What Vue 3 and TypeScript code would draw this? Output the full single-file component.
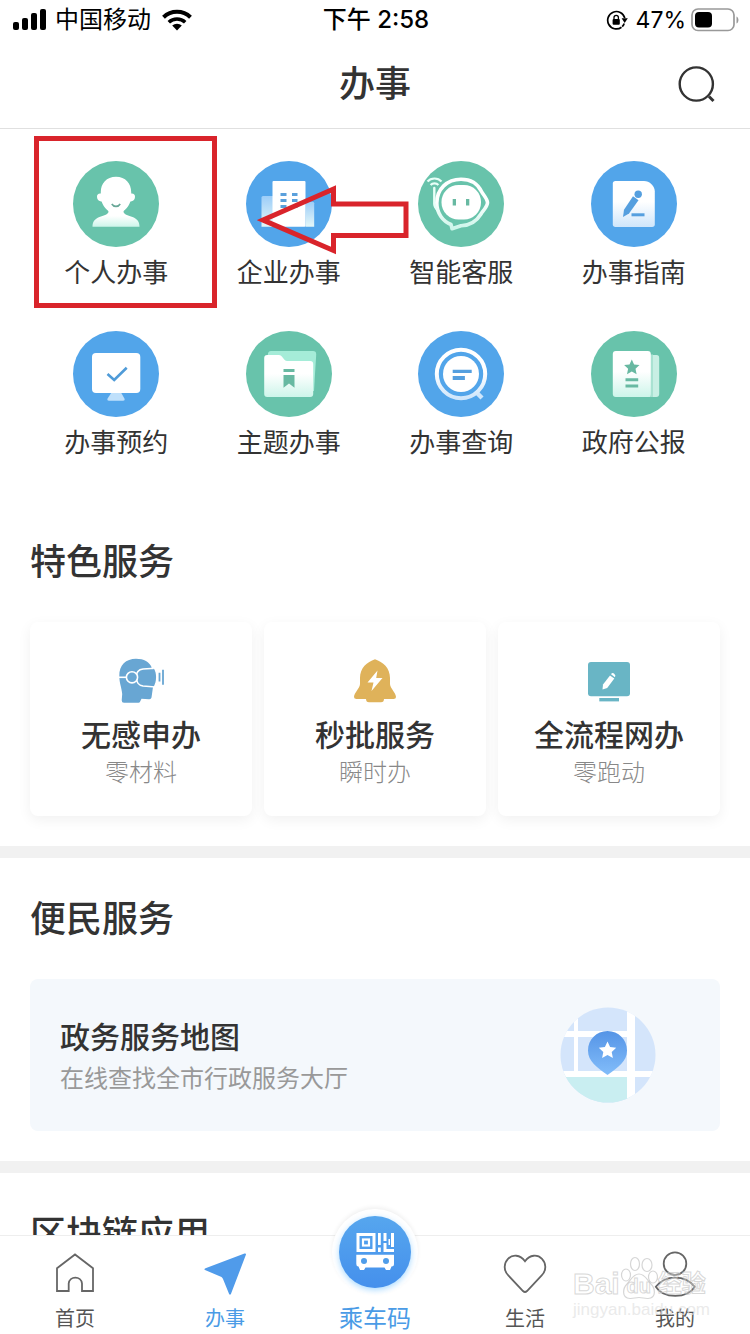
<script setup lang="ts">
interface Service {
  id: string
  label: string
  tone: 'green' | 'blue'
}

interface Feature {
  id: string
  title: string
  note: string
}

const services: Service[] = [
  { id: 'personal', label: '个人办事', tone: 'green' },
  { id: 'business', label: '企业办事', tone: 'blue' },
  { id: 'assistant', label: '智能客服', tone: 'green' },
  { id: 'guide', label: '办事指南', tone: 'blue' },
  { id: 'booking', label: '办事预约', tone: 'blue' },
  { id: 'topic', label: '主题办事', tone: 'green' },
  { id: 'query', label: '办事查询', tone: 'blue' },
  { id: 'gazette', label: '政府公报', tone: 'green' },
]

const features: Feature[] = [
  { id: 'vr', title: '无感申办', note: '零材料' },
  { id: 'bell', title: '秒批服务', note: '瞬时办' },
  { id: 'online', title: '全流程网办', note: '零跑动' },
]
</script>

<template>
  <div class="page">
    <div class="status">
      <div class="status-side">
        <svg class="signal" width="34" height="22" viewBox="0 0 34 22" aria-hidden="true">
          <rect x="0" y="13" width="6" height="8" rx="2" />
          <rect x="9" y="9" width="6" height="12" rx="2" />
          <rect x="18" y="4" width="6" height="17" rx="2" />
          <rect x="27" y="0" width="6" height="21" rx="2" />
        </svg>
        <span class="carrier">中国移动</span>
        <svg width="30" height="22" viewBox="0 0 30 22" aria-hidden="true">
          <path d="M1.500 8.200a19.500 19.500 0 0 1 27 0" fill="none" stroke="#000" stroke-width="4" />
          <path d="M6.800 13.200a12 12 0 0 1 16.400 0" fill="none" stroke="#000" stroke-width="3.600" />
          <path d="M15 21.500l-4.800-4.900a7 7 0 0 1 9.600 0z" />
        </svg>
      </div>
      <div class="clock">下午 2:58</div>
      <div class="status-side status-right">
        <svg width="22" height="22" viewBox="0 0 22 22" aria-hidden="true">
          <path d="M15.500 18.300A8.700 8.700 0 1 1 18.800 9" fill="none" stroke="#000" stroke-width="1.700" />
          <path d="M18.200 14.500a8.600 8.600 0 0 1-2 3.200" fill="none" stroke="#000" stroke-width="1.700" />
          <path d="M15.600 9.300h6.200l-3.100 4.600z" />
          <rect x="6.600" y="10" width="7.200" height="5.800" rx="1" />
          <path d="M8 10.500V8.600a2.200 2.200 0 0 1 4.400 0v1.900" fill="none" stroke="#000" stroke-width="1.300" />
        </svg>
        <span class="percent">47%</span>
        <svg width="48" height="24" viewBox="0 0 48 24" aria-hidden="true">
          <rect x="1" y="1" width="42" height="21.500" rx="6" fill="none" stroke="#999" stroke-width="1.700" />
          <rect x="4" y="4" width="17" height="15.500" rx="4" />
          <path d="M45.500 8.500c2.600 1 2.600 6 0 7z" fill="#999" />
        </svg>
      </div>
    </div>

    <header class="header">
      <h1>办事</h1>
      <button class="search" type="button" aria-label="搜索">
        <svg width="40" height="40" viewBox="0 0 40 40" fill="none" stroke="#333" stroke-width="2.400">
          <circle cx="18.300" cy="20" r="16.600" />
          <path d="M31 32.500l4.500 4.500" stroke-width="3" />
        </svg>
      </button>
    </header>

    <main class="content">
      <nav class="services" aria-label="服务">
        <a v-for="s in services" :key="s.id" class="service" href="#">
          <svg width="86" height="86" viewBox="0 0 86 86" aria-hidden="true">
            <defs>
              <linearGradient :id="'fade-' + s.id" x1="0" y1="0" x2="0" y2="1">
                <stop offset="0.45" stop-color="#fff" />
                <stop offset="1" :stop-color="s.tone === 'green' ? '#cdf5ea' : '#cfe6fb'" />
              </linearGradient>
              <linearGradient :id="'wing-' + s.id" x1="0" y1="0" x2="0" y2="1">
                <stop offset="0" :stop-color="s.tone === 'green' ? '#9be3cf' : '#9ccdf8'" />
                <stop offset="1" stop-color="#e4f7f8" />
              </linearGradient>
            </defs>
            <circle cx="43" cy="43" r="43" :fill="s.tone === 'green' ? '#68c3ab' : '#52a5ea'" />

            <g v-if="s.id === 'personal'">
              <path d="M35.500 46h15v5c1 3 5 3.500 9 5 5 2 7 5 7 9.800h-47c0-4.800 2-7.800 7-9.800 4-1.500 8-2 9-5z" :fill="`url(#fade-${s.id})`" />
              <path d="M43 15.700c9.500 0 15.200 6.600 15.200 15.300v1.500c2.500-.3 4 1.200 3.800 3.500-.2 3-2.200 4.600-4.600 4.400C55.300 46.500 50 52.500 43 52.500S30.700 46.500 28.600 40.400c-2.400.2-4.400-1.400-4.600-4.400-.2-2.300 1.300-3.800 3.800-3.500V31c0-8.700 5.700-15.300 15.200-15.300z" fill="#fff" />
              <path d="M38.800 43c2 3.200 6.400 3.200 8.400 0" fill="none" stroke="#68a797" stroke-width="1.600" />
            </g>

            <g v-else-if="s.id === 'business'">
              <path d="M17 35h10v30.700H15.500V36.500q0-1.500 1.500-1.500z" :fill="`url(#wing-${s.id})`" />
              <path d="M59.500 40.700h7.200q1.500 0 1.500 1.500v23.500h-8.700z" :fill="`url(#wing-${s.id})`" />
              <rect x="26.500" y="20" width="33" height="45.700" rx="1" fill="#fff" />
              <path d="M34.500 32h6v3h-6zM46 32h5.500v3H46zM34.500 38h6v3h-6zM46 38h5.500v3H46zM34.500 44h6v3h-6zM46 44h5.500v3H46z" fill="#5aa0dc" />
            </g>

            <g v-else-if="s.id === 'assistant'">
              <path d="M18.800 42C18.800 28 29 18.200 43 18.200c10 0 17 5 20.500 12.300 1.200 2.500 6 7.500 6 11.200s-4.800 8.500-6.500 11.300C58.500 60.500 51 64.500 43 64.700l-9 3-1-4.200C24.500 60 18.800 52 18.800 42z" :stroke="`url(#fade-${s.id})`" stroke-width="3.600" fill="none" stroke-linejoin="round" />
              <path d="M16.300 27v16c0 3 2 5 4 7" fill="none" stroke="#e8fff8" stroke-width="2.400" stroke-linecap="round" />
              <rect x="23.500" y="24" width="39.500" height="34.500" rx="17" fill="#fff" />
              <path d="M34.700 38H38v6.500h-3.300zM48 38h3.300v6.500H48z" fill="#68b9a2" />
              <path d="M9.500 20.500c3.500-4 10.500-4 14 0M12.600 24c2-2.300 5.800-2.300 7.800 0" fill="none" stroke="#e8fff8" stroke-width="2.200" />
            </g>

            <g v-else-if="s.id === 'guide'">
              <path d="M24.500 20H53c5.500 0 10.800 5 10.800 10.500v32.800q0 2.700-2.700 2.700H24.500q-2.700 0-2.700-2.700V22.700q0-2.700 2.700-2.700z" :fill="`url(#fade-${s.id})`" />
              <path d="M42 35.300l5.500 3.900-9.500 13.300-6 3.500 1-7.200z" fill="#559fdf" />
              <circle cx="47.200" cy="33.300" r="3.700" fill="#559fdf" />
              <path d="M40.500 52.300h13v3h-13z" fill="#559fdf" />
            </g>

            <g v-else-if="s.id === 'booking'">
              <path d="M38.500 61.500h9.500l3.700 6.500q.3 1.700-1.500 1.700H35.800q-1.800 0-1.500-1.700z" fill="#bfe0fb" />
              <rect x="19" y="22" width="48.300" height="40" rx="4" fill="#fff" />
              <path d="M34.500 43l6.700 6 12.500-12.300" fill="none" stroke="#4f9bd8" stroke-width="2.600" />
            </g>

            <g v-else-if="s.id === 'topic'">
              <path d="M25 20h42q3.200 0 3.200 3.200L68 60H21.800V24q0-4 3.200-4z" fill="#a5ecd8" />
              <path d="M21.200 24h11.500c4.500 0 4.300 6 8.500 6h23q3 0 3 3v30q0 3-3 3h-43q-3 0-3-3V27q0-3 3-3z" :fill="`url(#fade-${s.id})`" />
              <path d="M37.500 38h11v3h-11zM37.500 44h11v12.700L43 52.500l-5.500 4.200z" fill="#68b9a2" />
            </g>

            <g v-else-if="s.id === 'query'">
              <path d="M57.500 60.500l6.500 6.500" stroke="#cfe6fb" stroke-width="4.400" />
              <circle cx="43" cy="43" r="24.200" fill="none" :stroke="`url(#fade-${s.id})`" stroke-width="4" />
              <circle cx="43" cy="43" r="18" fill="#fff" />
              <path d="M34.700 38.800h19v3.200h-19zM34.700 45h12.200v4H34.700z" fill="#559fdf" />
            </g>

            <g v-else>
              <path d="M56 24h9.500q2.700 0 2.700 2.700V63q0 3-3 3H56z" fill="#c8efe4" />
              <path d="M59 23.500h3v42.500h-3z" fill="#a9e2d2" />
              <rect x="21.800" y="20" width="38" height="46" rx="3" :fill="`url(#fade-${s.id})`" />
              <path d="M40.800 28.500l2.300 5 5.400.6-4 3.700 1.100 5.400-4.800-2.700-4.800 2.700 1.100-5.400-4-3.700 5.400-.6z" fill="#68b9a2" />
              <path d="M34.500 47.300h12.700v3H34.500zM34.500 53.500h12.700v3H34.500z" fill="#68b9a2" />
            </g>
          </svg>
          <span>{{ s.label }}</span>
          <i v-if="s.id === 'personal'" class="mark-box"></i>
          <svg v-if="s.id === 'business'" class="mark-arrow" width="154" height="72" viewBox="256 184 154 72" aria-hidden="true">
            <path d="M262 220L332.500 189V204H405V235.500H332.500V250.500Z" fill="none" stroke="#d9242b" stroke-width="5" />
          </svg>
        </a>
      </nav>

      <section class="section">
        <h2>特色服务</h2>
        <div class="features">
          <a v-for="f in features" :key="f.id" class="feature" href="#">
            <svg width="48" height="48" viewBox="0 0 48 48" aria-hidden="true">
              <g v-if="f.id === 'vr'">
                <path d="M2.300 20C2 9 9 2.700 19 2.700c8 0 13.500 3.500 15.500 8.300L36 31l-1.500 10.500q-.4 2-2.500 1.800l-7.500-.5-1.500 3q-.3.900-1.500.9H7q-2.300 0-2.300-2.500l.5-6.200C4.500 31 2.300 27 2.300 20z" fill="#68a6d3" />
                <path d="M1 21.300h8" stroke="#fff" stroke-width="1.600" />
                <path d="M38 12.200L26 13c-4 .4-6.800 3.500-6.800 8.300S22 29.500 26 30l12 1z" fill="#68a6d3" stroke="#fff" stroke-width="1.600" />
                <circle cx="15" cy="21.300" r="5.600" fill="#68a6d3" stroke="#fff" stroke-width="1.600" />
                <path d="M36.500 12.500c3.400 3 3.400 14.500 0 17.500z" fill="#68a6d3" />
                <path d="M42.500 16.800v8.600M46 13.700v15" stroke="#68a6d3" stroke-width="1.800" />
              </g>
              <g v-else-if="f.id === 'bell'">
                <path d="M24 3.300C32 6 39 12 39 22v6c0 4 6 9 6 13q0 2-2.500 2H33c0 2-1 3.300-3 3.300H18c-2 0-3-1.300-3-3.300H5.500Q3 43 3 41c0-4 6-9 6-13v-6C9 12 16 6 24 3.300z" fill="#dfb25a" />
                <path d="M26.500 14.500L16.500 26.500h6l-2 8.500 11-13h-6.300z" fill="#fff" />
              </g>
              <g v-else>
                <rect x="3" y="6" width="42" height="34.300" rx="3" fill="#69b5c5" />
                <rect x="14.300" y="42" width="19.700" height="3.400" fill="#69b5c5" />
                <path d="M25 19.600l4.300 3-7.100 9.300-4.700 1.500.5-5z" fill="#fff" />
                <path d="M26 18.300q1.200-2 3.200-.6 2 1.500.7 3.500z" fill="#fff" />
              </g>
            </svg>
            <strong>{{ f.title }}</strong>
            <span>{{ f.note }}</span>
          </a>
        </div>
      </section>

      <section class="section divided">
        <h2>便民服务</h2>
        <a class="map-card" href="#">
          <div class="map-copy">
            <strong>政务服务地图</strong>
            <span>在线查找全市行政服务大厅</span>
          </div>
          <svg width="96" height="96" viewBox="0 0 96 96" aria-hidden="true">
            <defs>
              <clipPath id="map-clip"><circle cx="48" cy="48" r="47.500" /></clipPath>
              <linearGradient id="pin-fill" x1="0" y1="0" x2="0" y2="1">
                <stop offset="0" stop-color="#5594e6" />
                <stop offset="1" stop-color="#82bdfa" />
              </linearGradient>
            </defs>
            <g clip-path="url(#map-clip)">
              <rect width="96" height="96" fill="#d4e5fb" />
              <rect y="66" width="70" height="30" fill="#c9eef1" />
              <path d="M67 0h8v96h-8zM14 0h4v66h-4zM0 24h70v6H0zM0 64h96v6H0z" fill="#fff" />
            </g>
            <path d="M47.500 24C58.500 24 67 32.500 67 43.500c0 11-9 17-19.500 24.500C37 60.500 28 54.500 28 43.500 28 32.500 36.500 24 47.500 24z" fill="url(#pin-fill)" />
            <path d="M47.500 34.500l2.600 5.600 6.100.7-4.500 4.200 1.200 6-5.400-3-5.400 3 1.200-6-4.500-4.200 6.100-.7z" fill="#fff" />
          </svg>
        </a>
      </section>

      <section class="section divided">
        <h2>区块链应用</h2>
      </section>
    </main>

    <nav class="tabs" aria-label="主导航">
      <a class="tab" href="#">
        <svg width="48" height="48" viewBox="0 0 48 48" fill="none" stroke="#666" stroke-width="1.800" aria-hidden="true">
          <path d="M6 18.300L24 4.500l18 13.800V41H31V33.500a6.700 6.700 0 0 0-13.300 0V41H6z" />
        </svg>
        <span>首页</span>
      </a>
      <a class="tab active" href="#" aria-current="page">
        <svg width="48" height="48" viewBox="0 0 48 48" fill="#509bea" aria-hidden="true">
          <path d="M4.500 18.200L43.500 3.500q2-.5 1.300 1.500L30 43.800q-1 1.800-2 0L22 29q-.4-1.200-1.500-2L4 20q-1.300-1 .5-1.800z" />
        </svg>
        <span>办事</span>
      </a>
      <a class="tab ride" href="#">
        <svg width="86" height="86" viewBox="0 0 86 86" aria-hidden="true">
          <defs>
            <linearGradient id="ride-fill" x1="0" y1="0" x2="0" y2="1">
              <stop offset="0" stop-color="#56a6ee" />
              <stop offset="1" stop-color="#4590ec" />
            </linearGradient>
          </defs>
          <circle class="ride-disc" cx="43" cy="43" r="36" fill="url(#ride-fill)" />
          <rect x="26" y="25.500" width="16" height="16" fill="none" stroke="#fff" stroke-width="3" />
          <rect x="31" y="30.500" width="6" height="6" fill="none" stroke="#fff" stroke-width="2.200" />
          <path d="M46 24h2.800v12H46zM46 38.500h2.800V43H46zM51.500 24h3v8h-3zM51.500 34h3v9h-3zM59 24h3v14h-3zM54 40h8v3h-8zM56.500 30h1.500v6h-1.500z" fill="#fff" />
          <path d="M24.300 45.700H62V55q0 2.500-2.500 2.500l-1.500 3.500h-4l-1.500-2.500h-19L32 61h-4l-1.500-3.500q-2.200 0-2.200-2.500z" fill="#fff" />
          <circle cx="32" cy="52" r="3" fill="#4f9dea" />
          <circle cx="54" cy="52" r="3" fill="#4f9dea" />
        </svg>
        <span>乘车码</span>
      </a>
      <a class="tab" href="#">
        <svg width="48" height="48" viewBox="0 0 48 48" fill="none" stroke="#666" stroke-width="1.800" aria-hidden="true">
          <path d="M24 11.200C19 4.500 11.500 4.200 7 8.800c-4.600 4.700-4.300 12 .3 16.600L22 41q2 2 4 0l14.700-15.600c4.600-4.600 4.900-11.900.3-16.600-4.500-4.600-12-4.300-17 2.400z" />
        </svg>
        <span>生活</span>
      </a>
      <a class="tab" href="#">
        <svg width="48" height="48" viewBox="0 0 48 48" fill="none" stroke="#666" stroke-width="1.800" aria-hidden="true">
          <circle cx="24" cy="13.700" r="11.300" />
          <path d="M4.800 36.700C14 24.500 34 24.500 43.800 36.700 36 49 12.500 49 4.800 36.700z" />
        </svg>
        <span>我的</span>
      </a>
    </nav>

    <div class="watermark" aria-hidden="true">
      <div class="brand">
        <span>Bai</span>
        <span class="paw">
          <svg width="38" height="44" viewBox="0 0 38 44" fill="none" stroke="#d6d6d6" stroke-width="1.200">
            <ellipse cx="6" cy="19" rx="4.500" ry="6" />
            <ellipse cx="15" cy="8" rx="4.500" ry="6.500" />
            <ellipse cx="27" cy="9" rx="5" ry="6.500" />
            <ellipse cx="33" cy="21" rx="4.500" ry="6" />
            <path d="M19 18c6 0 8 6 12 10s6 14-3 14.500c-4 .2-5-1-9-1s-5 1.200-9 1C1 42 3 32 7 28s6-10 12-10z" />
          </svg>
          <em>du</em>
        </span>
        <span class="cjk">经验</span>
      </div>
      <div class="site">jingyan.baidu.com</div>
    </div>
  </div>
</template>

<style>
body {
  margin: 0;
  background: #fff;
}
</style>

<style scoped>
.page {
  position: relative;
  display: flex;
  flex-direction: column;
  height: 100vh;
  overflow: hidden;
  background: #fff;
  color: #333;
  font-family: Inter, "Noto Sans CJK SC", sans-serif;
}

a {
  color: inherit;
  text-decoration: none;
}

svg {
  display: block;
  flex: none;
}

.status {
  display: grid;
  grid-template-columns: 1fr auto 1fr;
  align-items: center;
  height: 40px;
  padding: 0 11px 0 13px;
  color: #000;
  font-size: 24px;
  line-height: 40px;
}

.status-side {
  display: flex;
  align-items: center;
}

.status-right {
  justify-content: flex-end;
}

.carrier {
  margin: 0 11px 0 8px;
}

.clock {
  font-weight: 500;
}

.percent {
  margin: 0 5px 0 8px;
  font-size: 23px;
}

.header {
  display: grid;
  grid-template-columns: 1fr auto 1fr;
  align-items: center;
  height: 88px;
  padding: 0 32px;
  border-bottom: 1px solid #e0e0e0;
}

h1,
h2 {
  margin: 0;
  font-size: 36px;
  font-weight: 500;
  line-height: 42px;
}

.header h1 {
  grid-column: 2;
}

.search {
  justify-self: end;
  padding: 0;
  border: 0;
  background: none;
}

.content {
  flex: 1;
  min-height: 0;
  overflow: hidden;
}

.services {
  display: grid;
  grid-template-columns: repeat(4, 1fr);
  row-gap: 40px;
  padding: 32px 30px 40px;
}

.service {
  position: relative;
  display: flex;
  flex-direction: column;
  align-items: center;
  gap: 8px;
  font-size: 26px;
  line-height: 36px;
}

.mark-box {
  position: absolute;
  top: -25px;
  left: 4px;
  box-sizing: border-box;
  width: 183px;
  height: 172px;
  border: 5px solid #d9242b;
  pointer-events: none;
}

.mark-arrow {
  position: absolute;
  z-index: 1;
  top: 23px;
  left: 54px;
  pointer-events: none;
}

.section {
  padding: 40px 30px 30px;
}

.section h2 {
  margin-bottom: 39px;
}

.divided {
  border-top: 12px solid #f1f1f1;
}

.features {
  display: grid;
  grid-template-columns: repeat(3, 1fr);
  gap: 12px;
}

.feature {
  display: flex;
  flex-direction: column;
  align-items: center;
  padding: 34px 0 26px;
  border-radius: 8px;
  background: #fff;
  box-shadow: 0 4px 14px rgba(0, 0, 0, 0.06);
}

.feature strong {
  margin-top: 10px;
  font-size: 30px;
  font-weight: 500;
  line-height: 42px;
}

.feature span {
  color: #888;
  font-size: 24px;
  font-weight: 300;
  line-height: 34px;
}

.map-card {
  display: flex;
  align-items: center;
  justify-content: space-between;
  padding: 28px 64px 28px 30px;
  border-radius: 8px;
  background: #f4f8fc;
}

.map-copy {
  display: flex;
  flex-direction: column;
  padding-top: 6px;
  line-height: 42px;
}

.map-copy strong {
  font-size: 30px;
  font-weight: 500;
}

.map-copy span {
  color: #999;
  font-size: 24px;
}

.tabs {
  display: flex;
  align-items: flex-end;
  height: 97px;
  padding-bottom: 1px;
  border-top: 1px solid #eee;
  background: #fff;
}

.tab {
  display: flex;
  flex: 1;
  flex-direction: column;
  align-items: center;
  gap: 7px;
  color: #555;
  font-size: 20px;
  line-height: 28px;
}

.active,
.ride {
  color: #4a9be6;
}

.ride {
  gap: 10px;
  font-size: 24px;
}

.ride svg {
  border-radius: 50%;
  background: #fff;
  box-shadow: 0 -2px 4px rgba(0, 0, 0, 0.06);
}

.ride-disc {
  filter: drop-shadow(0 2px 3px rgba(80, 180, 255, 0.5));
}

.watermark {
  position: absolute;
  right: 40px;
  bottom: 14px;
  color: rgba(255, 255, 255, 0.3);
  pointer-events: none;
}

.brand {
  display: flex;
  align-items: flex-end;
  font-family: "Liberation Sans", "Noto Sans CJK SC", sans-serif;
  font-size: 30px;
  font-weight: 700;
  line-height: 32px;
  -webkit-text-stroke: 1px rgba(190, 190, 190, 0.6);
}

.paw {
  display: grid;
  place-items: end center;
}

.paw svg,
.paw em {
  grid-area: 1 / 1;
}

.paw em {
  font-size: 20px;
  font-style: normal;
  line-height: 28px;
}

.brand .cjk {
  font-size: 24px;
}

.site {
  color: rgba(225, 225, 225, 0.7);
  font-family: "Liberation Sans", sans-serif;
  font-size: 17px;
  line-height: 20px;
}
</style>
